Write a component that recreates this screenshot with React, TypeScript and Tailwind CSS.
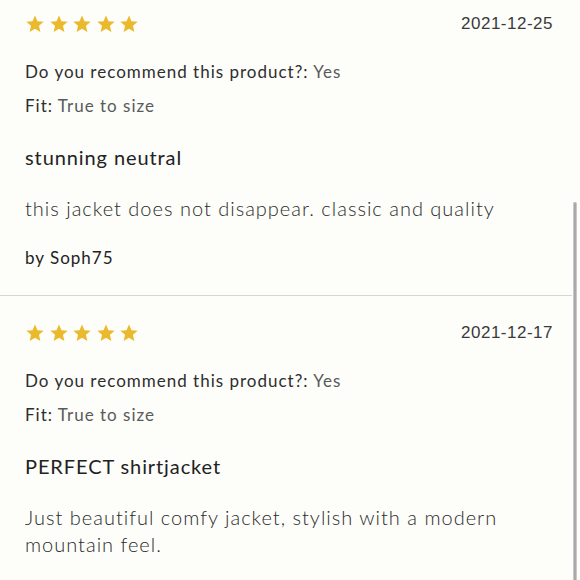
import React from 'react'

type Review = {
  date: string
  recommend: string
  fit: string
  title: string
  body: string
  author?: string
}

const reviews: Review[] = [
  {
    date: '2021-12-25',
    recommend: 'Yes',
    fit: 'True to size',
    title: 'stunning neutral',
    body: 'this jacket does not disappear. classic and quality',
    author: 'Soph75',
  },
  {
    date: '2021-12-17',
    recommend: 'Yes',
    fit: 'True to size',
    title: 'PERFECT shirtjacket',
    body: 'Just beautiful comfy jacket, stylish with a modern mountain feel.',
  },
]

const Star = () => (
  <svg width="20" height="20" viewBox="0 0 24 24" className="shrink-0">
    <path
      d="M12 1.8l2.95 6.9 7.45.64-5.65 4.9 1.7 7.3L12 17.66 5.55 21.54l1.7-7.3L1.6 9.34l7.45-.64z"
      fill="#ebb92c"
    />
  </svg>
)

const ReviewItem: React.FC<{ review: Review; first?: boolean }> = ({ review, first }) => (
  <div className={`flex flex-col px-[25px] pb-[25px] border-b border-[#d6d6d3] ${first ? 'pt-[14px]' : 'pt-[27px]'}`}>
    <div className="flex items-center justify-between h-[20px]">
      <div className="flex items-center gap-[3.5px]">
        {[0, 1, 2, 3, 4].map((i) => (
          <Star key={i} />
        ))}
      </div>
      <span
        className="text-[17px] tracking-[0.5px] text-[#3a3a3a] mr-[-6px]"
        style={{ fontFamily: '"Liberation Sans", Arial, sans-serif' }}
      >
        {review.date}
      </span>
    </div>
    <p className="mt-[26px] text-[17px] leading-[24px] tracking-[1px] text-[#2e2e2e]">
      Do you recommend this product?: <span className="text-[#5a5a5a]">{review.recommend}</span>
    </p>
    <p className="mt-[10px] text-[17px] leading-[24px] tracking-[1px] text-[#2e2e2e]">
      Fit: <span className="text-[#5a5a5a]">{review.fit}</span>
    </p>
    <h3 className="mt-[25px] text-[20px] leading-[28px] tracking-[0.9px] text-[#222]">{review.title}</h3>
    <p className="mt-[24px] text-[20px] leading-[27px] tracking-[1px] font-light text-[#2a2a2a] pr-[40px]">
      {review.body}
    </p>
    {review.author && (
      <p className="mt-[24px] text-[17px] leading-[24px] tracking-[1px] text-[#222]">by {review.author}</p>
    )}
  </div>
)

export default function App() {
  return (
    <div
      className="flex w-[580px] h-[580px] overflow-hidden bg-[#fdfdfa]"
      style={{ fontFamily: 'Lato, "Noto Sans", sans-serif' }}
    >
      <div className="flex flex-col w-[572px]">
        {reviews.map((r, i) => (
          <ReviewItem key={r.date} review={r} first={i === 0} />
        ))}
      </div>
      <div className="flex flex-col w-[8px] pt-[202px] pl-[0.5px]">
        <div className="w-[4.5px] flex-1 rounded-t-[2px] bg-[#a9a9a9] border-x border-[#c8c8c8]" />
      </div>
    </div>
  )
}
